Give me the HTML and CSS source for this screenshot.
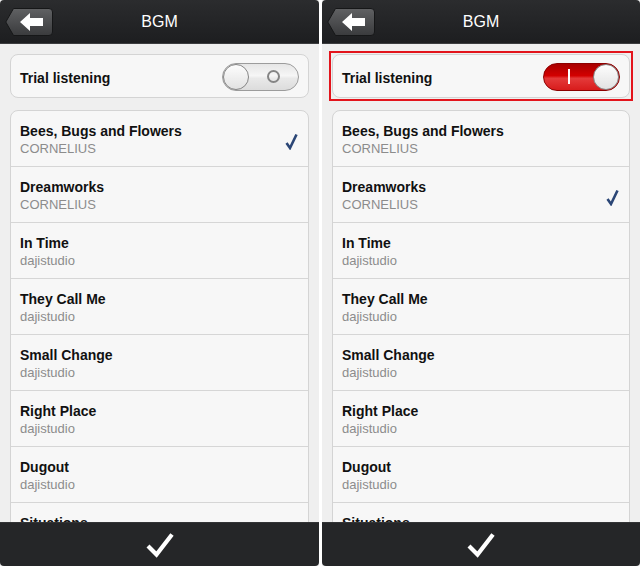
FILE: index.html
```html
<!DOCTYPE html>
<html lang="en">
<head>
    <meta charset="UTF-8">
    <meta name="viewport" content="width=device-width, initial-scale=1.0">
    <title>BGM</title>
    <link rel="stylesheet" href="styles.css">
</head>
<body>
    <div class="screens">
        <!-- Trial listening off -->
        <section class="screen">
            <header class="topbar">
                <button class="back" type="button">
                    <svg width="48" height="28" viewBox="0 0 48 28">
                        <defs>
                            <linearGradient id="backA" x1="0" y1="0" x2="0" y2="1">
                                <stop offset="0" stop-color="#606163"/>
                                <stop offset="1" stop-color="#3a3b3d"/>
                            </linearGradient>
                        </defs>
                        <path d="M8.5 0.5H44Q47.5 0.5 47.5 4V24Q47.5 27.5 44 27.5H8.5L0.8 14Z" fill="url(#backA)" stroke="#161718"/>
                        <polygon points="15,14 25,5 25,10 38,10 38,18 25,18 25,23" fill="#fff"/>
                    </svg>
                </button>
                <h1>BGM</h1>
            </header>

            <main class="content">
                <div class="highlight">
                    <div class="trial">
                        <span class="trial-text">Trial listening</span>
                        <span class="switch">
                            <span class="knob"></span>
                            <span class="switch-mark"><i class="ring"></i></span>
                        </span>
                    </div>
                </div>

                <ul class="tracks">
                    <li class="track">
                        <div><strong>Bees, Bugs and Flowers</strong><span>CORNELIUS</span></div>
                        <svg class="tick" width="13" height="17" viewBox="0 0 13 17"><polyline points="1.5,10 5,15 11.5,1.5" fill="none" stroke="#2b4676" stroke-width="2.6"/></svg>
                    </li>
                    <li class="track"><div><strong>Dreamworks</strong><span>CORNELIUS</span></div></li>
                    <li class="track"><div><strong>In Time</strong><span>dajistudio</span></div></li>
                    <li class="track"><div><strong>They Call Me</strong><span>dajistudio</span></div></li>
                    <li class="track"><div><strong>Small Change</strong><span>dajistudio</span></div></li>
                    <li class="track"><div><strong>Right Place</strong><span>dajistudio</span></div></li>
                    <li class="track"><div><strong>Dugout</strong><span>dajistudio</span></div></li>
                    <li class="track"><div><strong>Situations</strong><span>dajistudio</span></div></li>
                </ul>
            </main>

            <footer class="bottombar">
                <svg width="28" height="26" viewBox="0 0 28 26"><polyline points="2,14 10.5,22.5 26,2.5" fill="none" stroke="#fff" stroke-width="4.2"/></svg>
            </footer>
        </section>

        <!-- Trial listening on -->
        <section class="screen">
            <header class="topbar">
                <button class="back" type="button">
                    <svg width="48" height="28" viewBox="0 0 48 28">
                        <defs>
                            <linearGradient id="backB" x1="0" y1="0" x2="0" y2="1">
                                <stop offset="0" stop-color="#606163"/>
                                <stop offset="1" stop-color="#3a3b3d"/>
                            </linearGradient>
                        </defs>
                        <path d="M8.5 0.5H44Q47.5 0.5 47.5 4V24Q47.5 27.5 44 27.5H8.5L0.8 14Z" fill="url(#backB)" stroke="#161718"/>
                        <polygon points="15,14 25,5 25,10 38,10 38,18 25,18 25,23" fill="#fff"/>
                    </svg>
                </button>
                <h1>BGM</h1>
            </header>

            <main class="content">
                <div class="highlight is-marked">
                    <div class="trial">
                        <span class="trial-text">Trial listening</span>
                        <span class="switch is-on">
                            <span class="switch-mark"><i class="bar"></i></span>
                            <span class="knob"></span>
                        </span>
                    </div>
                </div>

                <ul class="tracks">
                    <li class="track"><div><strong>Bees, Bugs and Flowers</strong><span>CORNELIUS</span></div></li>
                    <li class="track">
                        <div><strong>Dreamworks</strong><span>CORNELIUS</span></div>
                        <svg class="tick" width="13" height="17" viewBox="0 0 13 17"><polyline points="1.5,10 5,15 11.5,1.5" fill="none" stroke="#2b4676" stroke-width="2.6"/></svg>
                    </li>
                    <li class="track"><div><strong>In Time</strong><span>dajistudio</span></div></li>
                    <li class="track"><div><strong>They Call Me</strong><span>dajistudio</span></div></li>
                    <li class="track"><div><strong>Small Change</strong><span>dajistudio</span></div></li>
                    <li class="track"><div><strong>Right Place</strong><span>dajistudio</span></div></li>
                    <li class="track"><div><strong>Dugout</strong><span>dajistudio</span></div></li>
                    <li class="track"><div><strong>Situations</strong><span>dajistudio</span></div></li>
                </ul>
            </main>

            <footer class="bottombar">
                <svg width="28" height="26" viewBox="0 0 28 26"><polyline points="2,14 10.5,22.5 26,2.5" fill="none" stroke="#fff" stroke-width="4.2"/></svg>
            </footer>
        </section>
    </div>
</body>
</html>
```

FILE: styles.css
```css
/* Global */
* {
    box-sizing: border-box;
    margin: 0;
    padding: 0;
}

body {
    font-family: 'Liberation Sans', Arial, sans-serif;
    background: #fff;
    overflow: hidden;
}

.screens {
    display: grid;
    grid-template-columns: 319px 318px;
    gap: 3px;
    height: 566px;
}

.screen {
    display: flex;
    flex-direction: column;
    height: 566px;
    background: #efefef;
    overflow: hidden;
}

/* Header */
.topbar {
    height: 44px;
    flex-shrink: 0;
    display: grid;
    grid-template-columns: 1fr auto 1fr;
    align-items: center;
    background: linear-gradient(#2b2c2e, #1d1e20);
    border-bottom: 1px solid #3c3d3f;
    border-radius: 4px 4px 0 0;
}

.back {
    justify-self: start;
    margin: 1px 0 0 5px;
    border: none;
    background: none;
    display: flex;
}

.topbar h1 {
    color: #fff;
    font-size: 16px;
    font-weight: normal;
    margin-top: 1px;
}

/* Content */
.content {
    flex: 1;
    overflow: hidden;
    padding: 10px 10px 0;
}

.highlight.is-marked {
    outline: 2px solid #e3141c;
    outline-offset: 1px;
}

.trial {
    height: 44px;
    display: flex;
    align-items: center;
    justify-content: space-between;
    padding: 1px 9px 0;
    background: #f7f7f7;
    border: 1px solid #d4d4d4;
    border-radius: 8px;
}

.trial-text {
    font-size: 14px;
    font-weight: bold;
    color: #111;
    padding-top: 2px;
}

/* Switch */
.switch {
    width: 77px;
    height: 28px;
    display: flex;
    align-items: center;
    border: 1px solid #9c9c9c;
    border-radius: 14px;
    background: linear-gradient(#e6e6e6, #f6f6f6 45%, #e9e9e9 55%, #dcdcdc);
}

.switch.is-on {
    border-color: #8c0000;
    background: linear-gradient(#a80000, #d30000 45%, #e43a3a 55%, #d81c1c);
}

.knob {
    width: 26px;
    height: 26px;
    border-radius: 50%;
    border: 1px solid #858585;
    background: linear-gradient(#fdfdfd, #e2e2e2);
    flex-shrink: 0;
}

.switch-mark {
    flex: 1;
    display: flex;
    justify-content: center;
}

.ring {
    width: 13px;
    height: 13px;
    border: 2px solid #858585;
    border-radius: 50%;
}

.bar {
    width: 2px;
    height: 15px;
    background: #fff;
}

/* Track list */
.tracks {
    list-style: none;
    margin-top: 12px;
    background: #f7f7f7;
    border: 1px solid #d4d4d4;
    border-radius: 8px 8px 0 0;
}

.track {
    display: flex;
    align-items: center;
    justify-content: space-between;
    padding: 12px 10px 9px 9px;
    border-bottom: 1px solid #d6d6d6;
}

.track strong {
    display: block;
    font-size: 14px;
    line-height: 17px;
    color: #111;
}

.track span {
    display: block;
    margin-top: 1px;
    font-size: 13px;
    line-height: 16px;
    color: #8c8c8c;
}

.tick {
    margin-top: 3px;
}

/* Footer */
.bottombar {
    height: 44px;
    flex-shrink: 0;
    display: flex;
    align-items: center;
    justify-content: center;
    background: #252628;
    border-top: 1px solid #333436;
    border-radius: 0 0 4px 4px;
}
```
